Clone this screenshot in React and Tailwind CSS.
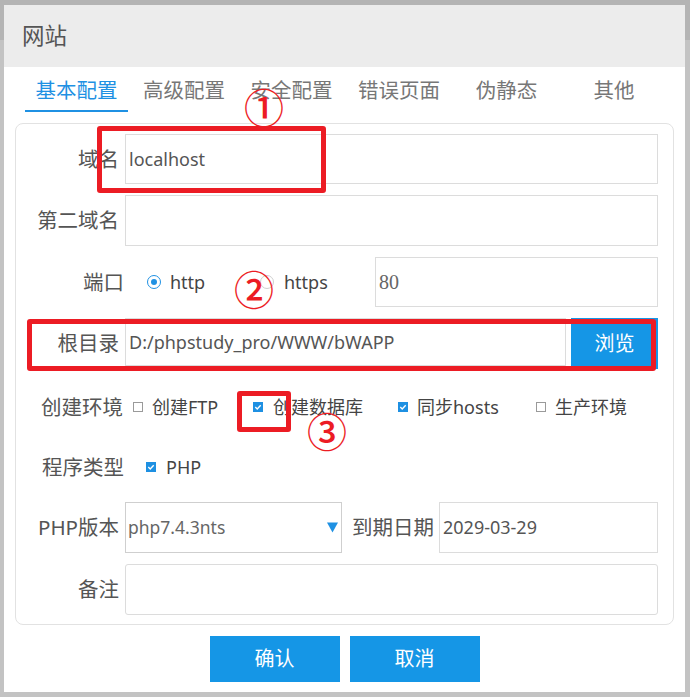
import React from "react";

const FONT = { fontFamily: '"Noto Sans", "Noto Sans CJK SC", sans-serif' };
const CJK = { fontFamily: '"Noto Sans CJK SC", sans-serif' };

function Check({ on }) {
  return on ? (
    <svg width="10" height="10" viewBox="0 0 10 10" className="shrink-0">
      <rect width="10" height="10" fill="#1e90e2" />
      <path d="M2.3 5.1 L4.2 6.9 L7.7 3.2" stroke="#fff" strokeWidth="1.4" fill="none" />
    </svg>
  ) : (
    <div className="w-[10px] h-[10px] border border-[#9a9a9a] bg-white shrink-0" />
  );
}

function Input({ children, className = "" }) {
  return (
    <div className={`h-full border border-[#dcdcdc] bg-white flex items-center pl-[3px] text-[18px] text-[#555] ${className}`}>
      {children}
    </div>
  );
}

function Label({ children, w = "w-[103px]" }) {
  return <div className={`${w} shrink-0 text-right text-[20.5px] text-[#555] leading-none`}>{children}</div>;
}

function Num({ children, className }) {
  return (
    <div
      className={`absolute w-[40px] h-[46px] flex items-center justify-center text-[40px] font-medium leading-none text-[#ec1c24] ${className}`}
      style={CJK}
    >
      {children}
    </div>
  );
}

export default function App() {
  return (
    <div className="relative w-[690px] h-[697px] bg-[#c3c3c3] overflow-hidden" style={FONT}>
      <div className="absolute left-0 top-0 w-full h-[40px] bg-[#b4b4b4]" />
      <div className="relative ml-[4px] pt-[5px]">
        <div className="w-[681px] h-[687px] bg-white flex flex-col">
          {/* header */}
          <div className="h-[62px] bg-[#ececec] flex items-center pl-[18px] text-[22.5px] text-[#555]">网站</div>
          {/* tabs */}
          <div className="flex h-[45px] pl-[21px] gap-[4.5px]">
            {["基本配置", "高级配置", "安全配置", "错误页面", "伪静态", "其他"].map((t, i) => (
              <div
                key={t}
                className={`w-[103px] h-[45px] flex justify-center pt-[10px] text-[20.5px] leading-[26px] ${
                  i === 0 ? "text-[#1f91e3] border-b-2 border-[#1f91e3]" : "text-[#777]"
                }`}
              >
                {t}
              </div>
            ))}
          </div>
          {/* panel */}
          <div className="ml-[11px] mt-[11px] w-[659px] h-[502px] border border-[#e2e2e2] rounded-[8px] pt-[10px] pr-[15px] flex flex-col">
            <div className="h-[50px] flex items-center">
              <Label>域名</Label>
              <Input className="ml-[6px] flex-1">localhost</Input>
            </div>
            <div className="h-[51px] mt-[11px] flex items-center">
              <Label>第二域名</Label>
              <Input className="ml-[6px] flex-1" />
            </div>
            <div className="h-[50px] mt-[11px] flex items-center">
              <Label w="w-[108px]">端口</Label>
              <div className="ml-[23px] w-[14px] h-[14px] rounded-full border-[1.5px] border-[#1f91e3] flex items-center justify-center shrink-0">
                <div className="w-[6px] h-[6px] rounded-full bg-[#1f91e3]" />
              </div>
              <div className="ml-[9px] w-[90px] text-[18px] text-[#444]">http</div>
              <div className="w-[14px] h-[14px] rounded-full border border-[#cfcfcf] shrink-0" />
              <div className="ml-[10px] w-[91px] text-[18px] text-[#444]">https</div>
              <Input className="flex-1">
                <span style={{ fontFamily: '"Liberation Serif", serif' }} className="text-[20px] text-[#666]">80</span>
              </Input>
            </div>
            <div className="h-[51px] mt-[11px] flex items-center">
              <Label>根目录</Label>
              <Input className="ml-[6px] flex-1 !h-[48px] self-start">D:/phpstudy_pro/WWW/bWAPP</Input>
              <div className="ml-[5px] w-[87px] h-full bg-[#1596e6] text-white text-[20px] flex items-center justify-center">浏览</div>
            </div>
            <div className="h-[76px] flex items-center text-[18px] text-[#444]">
              <Label w="w-[107px]">创建环境</Label>
              <div className="ml-[10px] w-[120px] flex items-center">
                <Check on={false} />
                <span className="ml-[9px]">创建FTP</span>
              </div>
              <div className="w-[145px] flex items-center">
                <Check on />
                <span className="ml-[10px]">创建数据库</span>
              </div>
              <div className="w-[138px] flex items-center">
                <Check on />
                <span className="ml-[9px]">同步hosts</span>
              </div>
              <div className="flex items-center">
                <Check on={false} />
                <span className="ml-[9px]">生产环境</span>
              </div>
            </div>
            <div className="h-[44px] flex items-center text-[18px] text-[#444]">
              <Label w="w-[108px]">程序类型</Label>
              <div className="ml-[22px] flex items-center">
                <Check on />
                <span className="ml-[10px]">PHP</span>
              </div>
            </div>
            <div className="h-[51px] mt-[13px] flex items-center">
              <Label>PHP版本</Label>
              <div className="ml-[6px] w-[217px] h-full border border-[#cfcfcf] flex items-center justify-between pl-[2px] pr-[3px] text-[17.5px] text-[#666]">
                <span>php7.4.3nts</span>
                <svg width="11" height="11" viewBox="0 0 11 11">
                  <polygon points="0,0.5 11,0.5 5.5,10.5" fill="#1f91e3" />
                </svg>
              </div>
              <div className="ml-[10px] text-[20.5px] text-[#555] leading-none">到期日期</div>
              <Input className="ml-[5px] flex-1">2029-03-29</Input>
            </div>
            <div className="h-[51px] mt-[11px] flex items-center">
              <Label>备注</Label>
              <Input className="ml-[6px] flex-1 rounded-[3px]" />
            </div>
          </div>
          {/* buttons */}
          <div className="mt-[11px] flex justify-center gap-[10px]">
            <div className="w-[130px] h-[46px] bg-[#1596e6] text-white text-[20px] flex items-center justify-center">确认</div>
            <div className="w-[130px] h-[46px] bg-[#1596e6] text-white text-[20px] flex items-center justify-center">取消</div>
          </div>
        </div>
      </div>

      {/* annotations */}
      <div className="absolute left-[97px] top-[126px] w-[229px] h-[67px] border-[5px] border-[#ec1c24] rounded-[3px]" />
      <div className="absolute left-[27px] top-[319px] w-[629px] h-[52px] border-[5px] border-[#ec1c24] rounded-[3px]" />
      <div className="absolute left-[237px] top-[391px] w-[54px] h-[41px] border-[5px] border-[#ec1c24] rounded-[3px]" />
      <Num className="left-[244px] top-[83px]">①</Num>
      <Num className="left-[234px] top-[265px]">②</Num>
      <Num className="left-[307px] top-[407px]">③</Num>
    </div>
  );
}
